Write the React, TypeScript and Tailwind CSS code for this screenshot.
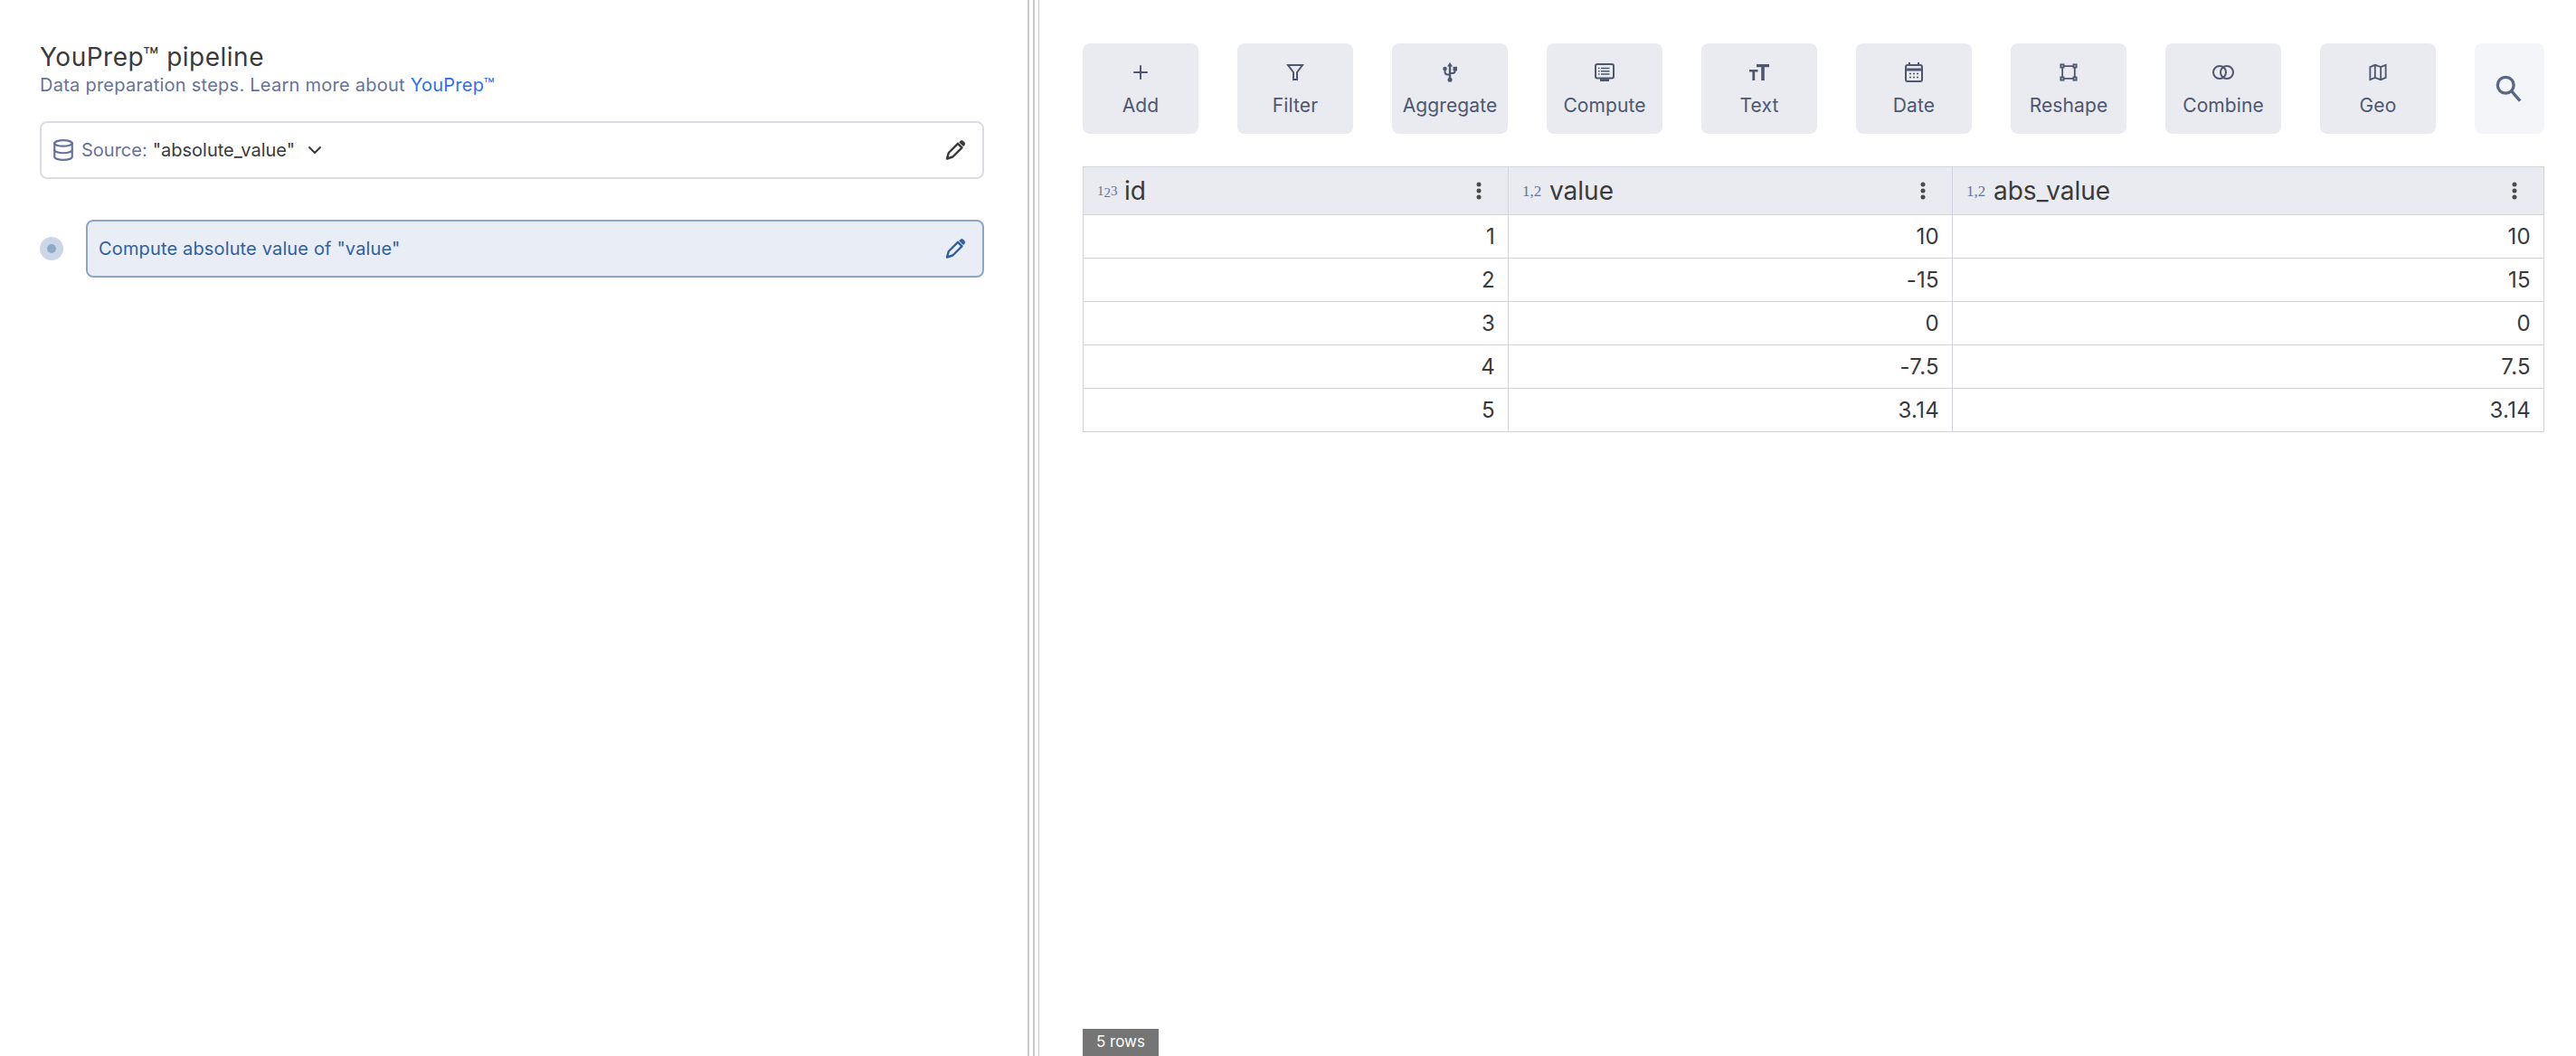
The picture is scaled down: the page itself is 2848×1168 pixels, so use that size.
import { ChevronDown, Database, Plus } from "lucide-react";
import type { ReactNode } from "react";

const PencilIcon = ({ className }: { className: string }) => (
  <svg width="24" height="24" viewBox="0 0 24 24" className={className} fill="none" stroke="currentColor">
    <path d="M3 21.500 4.800 15 15 4.800 19.500 9.300 9.300 19.500z" strokeWidth="2.400" strokeLinejoin="round" />
    <path
      d="m16.500 3.300 1.300-1.300a2.200 2.200 0 0 1 3 0l1.500 1.500a2.200 2.200 0 0 1 0 3l-1.300 1.300z"
      fill="currentColor"
      strokeWidth="0.500"
    />
  </svg>
);

const FilterIcon = () => (
  <svg width="20" height="20" viewBox="0 0 20 20" fill="none" stroke="currentColor" strokeWidth="2">
    <path d="M2 2h16l-6 8v8H8v-8z" />
  </svg>
);

const UsbIcon = () => (
  <svg width="16" height="22" viewBox="0 0 16 22" fill="currentColor">
    <path d="M8 0l3 4.500H5z" />
    <rect x="6.800" y="4" width="2.400" height="15" />
    <circle cx="8" cy="19.300" r="2.500" />
    <circle cx="2.500" cy="7" r="2.300" />
    <rect x="11.500" y="4.800" width="4.500" height="4.500" />
    <path d="M2.500 8v2.500a3 3 0 0 0 3 3H8M13.700 8v1a3 3 0 0 1-3 3H8" fill="none" stroke="currentColor" strokeWidth="2" />
  </svg>
);

const ComputeIcon = () => (
  <svg width="22" height="21" viewBox="0 0 22 21" fill="none" stroke="currentColor">
    <rect x="1" y="1" width="20" height="15.500" rx="2" strokeWidth="2" />
    <path d="M7 5.500h9.500M7 8.800h9.500M7 12h9.500" strokeWidth="1.500" />
    <path d="M4 5.500h1.500M4 8.800h1.500M4 12h1.500" strokeWidth="1.500" />
    <path d="M6 18.500h10" strokeWidth="3" />
  </svg>
);

const TextSizeIcon = () => (
  <svg width="22" height="18" viewBox="0 0 22 18" fill="currentColor">
    <path d="M8 0h14v3.200h-5.200V18h-3.600V3.200H8z" />
    <path d="M0 6h9.500v2.600H6.200V18H3.400V8.600H0z" />
  </svg>
);

const CalendarIcon = () => (
  <svg width="20" height="22" viewBox="0 0 20 22" fill="none" stroke="currentColor">
    <rect x="1" y="3" width="18" height="18" rx="2" strokeWidth="2" />
    <path d="M1 8h18" strokeWidth="3" />
    <path d="M5 0v4M15 0v4" strokeWidth="2" />
    <path d="M5 12.500h2M9 12.500h2M13 12.500h2M5 16.500h2M9 16.500h2M13 16.500h2" strokeWidth="1.600" />
  </svg>
);

const ReshapeIcon = () => (
  <svg width="20" height="20" viewBox="0 0 22 22" fill="none" stroke="currentColor" strokeWidth="2">
    <path d="M3.500 5v12M18.500 5v12M5 3.500h12M5 18.500h12" />
    <rect x="1.500" y="1.500" width="3.500" height="3.500" />
    <rect x="17" y="1.500" width="3.500" height="3.500" />
    <rect x="1.500" y="17" width="3.500" height="3.500" />
    <rect x="17" y="17" width="3.500" height="3.500" />
  </svg>
);

const CombineIcon = () => (
  <svg width="24" height="16" viewBox="0 0 24 16" fill="none" stroke="currentColor" strokeWidth="2">
    <circle cx="8" cy="8" r="7" />
    <circle cx="16" cy="8" r="7" />
  </svg>
);

const MapIcon = () => (
  <svg width="20" height="20" viewBox="0 0 22 22" fill="none" stroke="currentColor" strokeWidth="2">
    <path d="M1.500 4.500 7.500 2l7 2.500 6-2.500v15.500l-6 2.500-7-2.500-6 2.500z" />
    <path d="M7.500 2v15.500M14.500 4.500V20" />
  </svg>
);

const SearchIcon = () => (
  <svg width="30" height="30" viewBox="0 0 32 32" fill="none" stroke="currentColor" strokeWidth="3.500" className="mr-[2px]">
    <circle cx="12" cy="12" r="9.500" />
    <path d="m19 19 10 11.500" />
  </svg>
);

const Kebab = () => (
  <svg width="6" height="20" viewBox="0 0 6 20" fill="#4a4a4a">
    <circle cx="3" cy="3" r="2.500" />
    <circle cx="3" cy="10" r="2.500" />
    <circle cx="3" cy="17" r="2.500" />
  </svg>
);

const ops: { label: string; icon: ReactNode }[] = [
  { label: "Add", icon: <Plus size={24} strokeWidth={2} /> },
  { label: "Filter", icon: <FilterIcon /> },
  { label: "Aggregate", icon: <UsbIcon /> },
  { label: "Compute", icon: <ComputeIcon /> },
  { label: "Text", icon: <TextSizeIcon /> },
  { label: "Date", icon: <CalendarIcon /> },
  { label: "Reshape", icon: <ReshapeIcon /> },
  { label: "Combine", icon: <CombineIcon /> },
  { label: "Geo", icon: <MapIcon /> },
];

const rows = [
  ["1", "10", "10"],
  ["2", "-15", "15"],
  ["3", "0", "0"],
  ["4", "-7.5", "7.5"],
  ["5", "3.14", "3.14"],
];

function TypeMark({ kind }: { kind: "int" | "float" }) {
  return (
    <span className="w-[20px] font-['Liberation_Serif',serif] leading-none text-[#66739a]">
      {kind === "int" ? (
        <span className="text-[15px]">
          1<span className="relative top-[2px]">2</span>3
        </span>
      ) : (
        <span className="text-[17px]">1,2</span>
      )}
    </span>
  );
}

function HeaderCell({ name, kind }: { name: string; kind: "int" | "float" }) {
  return (
    <th className="border border-[#d3d4df] p-0 font-normal">
      <div className="flex h-[52px] items-center pl-[15px] pr-[29px]">
        <TypeMark kind={kind} />
        <span className="ml-[10px] text-[28px] text-[#3a3a3a]">{name}</span>
        <span className="ml-auto flex">
          <Kebab />
        </span>
      </div>
    </th>
  );
}

export default function App() {
  return (
    <div className="flex h-[1168px] w-[2848px] bg-white font-['Inter',sans-serif]">
      <div className="w-[1136px] shrink-0 pl-[44px] pr-[48px] pt-[44px]">
        <h1 className="text-[28px] leading-[38px] tracking-[0.5px] text-[#3a3a3a]">YouPrep™ pipeline</h1>
        <p className="mt-[-1px] text-[20px] leading-[26px] tracking-[0.25px] text-[#66739a]">
          Data preparation steps. Learn more about <span className="text-[#2f6fed]">YouPrep™</span>
        </p>
        <div className="mt-[27px] flex h-[64px] items-center rounded-[8px] border-2 border-[#dcdce6] pl-[11px] pr-[18px] text-[20px]">
          <Database size={26} strokeWidth={2} className="text-[#66739a]" />
          <span className="ml-[7px] text-[#66739a]">Source:</span>
          <span className="ml-[6px] text-[#3a3a3a]">"absolute_value"</span>
          <ChevronDown size={24} strokeWidth={2} className="ml-[10px] text-[#3a3a3a]" />
          <PencilIcon className="ml-auto text-[#3a3a3a]" />
        </div>
        <div className="mt-[45px] flex items-center gap-[25px]">
          <div className="flex size-[26px] items-center justify-center rounded-full bg-[#cbd7e8]">
            <div className="size-[10px] rounded-full bg-[#8fa8c8]" />
          </div>
          <div className="flex h-[64px] flex-1 items-center rounded-[8px] border-2 border-[#8ba6cb] bg-[#e9eef6] pl-[12px] pr-[18px]">
            <span className="text-[20px] tracking-[0.15px] text-[#33609b]">Compute absolute value of "value"</span>
            <PencilIcon className="ml-auto text-[#33609b]" />
          </div>
        </div>
      </div>

      <div className="flex w-[13px] shrink-0 justify-between">
        <div className="w-[2px] bg-[#c8c8c8]" />
        <div className="w-[2px] bg-[#c8c8c8]" />
        <div className="w-[1px] bg-[#c8c8c8]" />
      </div>

      <div className="flex flex-1 flex-col pl-[48px] pr-[36px] pt-[48px]">
        <div className="flex gap-[43px]">
          {ops.map((op) => (
            <button
              key={op.label}
              className="flex h-[100px] w-[128px] flex-col items-center rounded-[8px] bg-[#e9ebf0] text-[#4e5670]"
            >
              <span className="mt-[18px] flex h-[28px] items-center">{op.icon}</span>
              <span className="mt-[9px] text-[21px] leading-[28px] tracking-[0.1px]">{op.label}</span>
            </button>
          ))}
          <button className="flex h-[100px] w-[77px] items-center justify-center rounded-[8px] bg-[#f4f5f8] text-[#5a6683]">
            <SearchIcon />
          </button>
        </div>

        <table className="mt-[36px] w-[1615px] table-fixed border-collapse">
          <colgroup>
            <col className="w-[470px]" />
            <col className="w-[491px]" />
            <col className="w-[654px]" />
          </colgroup>
          <thead className="bg-[#e9ebf0]">
            <tr>
              <HeaderCell name="id" kind="int" />
              <HeaderCell name="value" kind="float" />
              <HeaderCell name="abs_value" kind="float" />
            </tr>
          </thead>
          <tbody>
            {rows.map((row) => (
              <tr key={row[0]}>
                {row.map((cell, i) => (
                  <td
                    key={i}
                    className="h-[48px] border border-[#d3d4df] pr-[14px] text-right text-[24px] leading-none tracking-[0.3px] text-[#3a3a3a]"
                  >
                    {cell}
                  </td>
                ))}
              </tr>
            ))}
          </tbody>
        </table>

        <div className="mt-auto flex h-[30px] w-[84px] items-center justify-center bg-[#757575] text-[17px] text-white">
          5 rows
        </div>
      </div>
    </div>
  );
}
